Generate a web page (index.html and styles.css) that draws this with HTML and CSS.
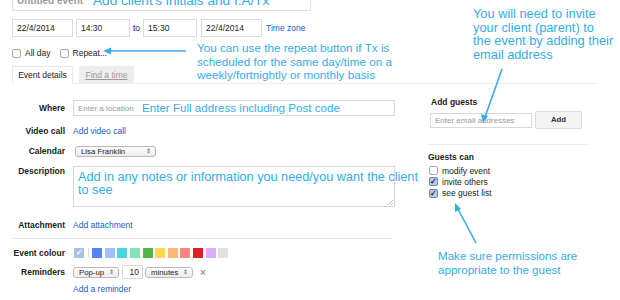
FILE: index.html
```html
<!DOCTYPE html>
<html>
<head>
    <title>Edit event</title>
    <link rel="stylesheet" href="styles.css">
</head>
<body>
<div class="page">
    <div class="title-box">
        <span class="title-text">Untitled event</span>
    </div>

    <div class="date-row">
        <div class="field date">22/4/2014</div>
        <div class="field time">14:30</div>
        <span class="to">to</span>
        <div class="field time">15:30</div>
        <div class="field date">22/4/2014</div>
        <a class="link">Time zone</a>
    </div>

    <div class="check-row">
        <label><span class="box"></span>All day</label>
        <label><span class="box"></span>Repeat...</label>
    </div>

    <div class="tabs">
        <div class="tab active">Event details</div>
        <div class="tab">Find a time</div>
    </div>

    <div class="content">
        <div class="form">
            <div class="row r-where">
                <div class="label">Where</div>
                <div class="input wide"><span class="ph">Enter a location</span></div>
            </div>
            <div class="row r-video">
                <div class="label">Video call</div>
                <a class="link">Add video call</a>
            </div>
            <div class="row r-cal">
                <div class="label">Calendar</div>
                <div class="select cal">Lisa Franklin<span class="arr">&#8661;</span></div>
            </div>
            <div class="row r-desc">
                <div class="label">Description</div>
                <div class="input wide area"><span class="grip"></span></div>
            </div>
            <div class="row r-attach">
                <div class="label">Attachment</div>
                <a class="link">Add attachment</a>
            </div>
            <div class="rule"></div>
            <div class="row r-colour">
                <div class="label">Event colour</div>
                <div class="swatches">
                    <span class="sw picked">&#10003;</span>
                    <span class="sep"></span>
                    <span class="sw" style="background:#5484ed"></span>
                    <span class="sw" style="background:#a4bdfc"></span>
                    <span class="sw" style="background:#46d6db"></span>
                    <span class="sw" style="background:#7ae7bf"></span>
                    <span class="sw" style="background:#51b749"></span>
                    <span class="sw" style="background:#fbd75b"></span>
                    <span class="sw" style="background:#ffb878"></span>
                    <span class="sw" style="background:#ff887c"></span>
                    <span class="sw" style="background:#dc2127"></span>
                    <span class="sw" style="background:#dbadff"></span>
                    <span class="sw" style="background:#e1e1e1"></span>
                </div>
            </div>
            <div class="row r-remind">
                <div class="label">Reminders</div>
                <div class="select popup">Pop-up<span class="arr">&#8661;</span></div>
                <div class="input num">10</div>
                <div class="select mins">minutes<span class="arr">&#8661;</span></div>
                <span class="close">&times;</span>
            </div>
            <div class="row r-add">
                <div class="label"></div>
                <a class="link">Add a reminder</a>
            </div>
        </div>

        <div class="side">
            <div class="side-title">Add guests</div>
            <div class="guest-row">
                <div class="input email"><span class="ph">Enter email addresses</span></div>
                <div class="btn">Add</div>
            </div>
            <div class="side-rule"></div>
            <div class="side-title can">Guests can</div>
            <label class="perm first"><span class="box"></span>modify event</label>
            <label class="perm"><span class="box on">&#10003;</span>invite others</label>
            <label class="perm"><span class="box on">&#10003;</span>see guest list</label>
        </div>
    </div>

    <!-- notes drawn over the screenshot -->
    <div class="note n-title">Add client's initials and I.A/Tx</div>
    <div class="note n-where">Enter Full address including Post code</div>
    <div class="note n-desc">Add in any notes or information you need/you want the client<br>to see</div>
    <div class="note n-repeat">You can use the repeat button if Tx is<br>scheduled for the same day/time on a<br>weekly/fortnightly or monthly basis</div>
    <div class="note n-invite">You will need to invite<br>your client (parent) to<br>the event by adding their<br>email address</div>
    <div class="note n-perm">Make sure permissions are<br>appropriate to the guest</div>

    <svg class="arrows" width="620" height="300" viewBox="0 0 620 300">
        <g stroke="#35ade6" stroke-width="1.6" fill="none">
            <line x1="186" y1="51" x2="108" y2="51"/>
            <line x1="502" y1="69" x2="485" y2="117"/>
            <line x1="476" y1="243" x2="458" y2="209"/>
        </g>
        <g fill="#35ade6">
            <polygon points="103,51 111,47.5 111,54.5"/>
            <polygon points="483,123 481,114 488,116"/>
            <polygon points="455,203 455,212 461,209"/>
        </g>
    </svg>
</div>
</body>
</html>
```

FILE: styles.css
```css
body {
    margin: 0;
    background: #fff;
    font-family: Arial, "Liberation Sans", sans-serif;
    font-size: 8.5px;
    color: #222;
}

.page {
    position: relative;
    width: 620px;
    height: 300px;
    overflow: hidden;
    padding-left: 12px;
    box-sizing: border-box;
}

.link {
    color: #1a5ad0;
    font-size: 8.5px;
}

/* title */
.title-box {
    width: 299px;
    height: 21px;
    margin-top: -10px;
    border: 1px solid #e0e0e0;
    box-sizing: border-box;
    padding-left: 4px;
}

.title-text {
    font-size: 10px;
    font-weight: bold;
    color: #9a9a9a;
    line-height: 20px;
}

/* date row */
.date-row {
    display: flex;
    align-items: center;
    margin-top: 8px;
    height: 18px;
}

.field {
    height: 18px;
    border: 1px solid #dcdcdc;
    box-sizing: border-box;
    padding-left: 4px;
    line-height: 16px;
    font-size: 8.5px;
    color: #222;
}

.field.date { width: 61px; }
.field.time { width: 54px; margin-left: 3px; }
.to + .field.time { margin-left: 0; }
.field.time + .field.date { margin-left: 4px; }
.to { margin: 0 3px 0 3px; font-size: 8.5px; }
.date-row .link { margin-left: 4px; }

/* checkbox row */
.check-row {
    display: flex;
    gap: 9px;
    margin-top: 10px;
    height: 12px;
    align-items: center;
}

.check-row label, .perm {
    display: flex;
    align-items: center;
    font-size: 8.5px;
}

.box {
    width: 7px;
    height: 7px;
    border: 1px solid #aaa;
    border-radius: 2px;
    margin-right: 4px;
    background: #fbfbfb;
    font-size: 8px;
    line-height: 7px;
    text-align: center;
    color: #223;
    font-weight: bold;
}

.box.on {
    background: #b9c9e6;
    border-color: #6f86b0;
}

/* tabs */
.tabs {
    display: flex;
    gap: 6px;
    margin-top: 7px;
    width: 585px;
    border-bottom: 1px solid #eee;
}

.tab {
    height: 18px;
    line-height: 18px;
    width: 55px;
    text-align: center;
    font-size: 8.5px;
    background: #eee;
    color: #999;
    text-decoration: underline;
    box-sizing: border-box;
    margin-bottom: -1px;
}

.tab.active {
    background: #fff;
    color: #222;
    text-decoration: none;
    border: 1px solid #e8e8e8;
    border-bottom: 1px solid #fff;
    width: 61px;
    line-height: 16px;
}

/* main content */
.content {
    display: flex;
}

.form {
    width: 383px;
}

.row {
    display: flex;
    align-items: center;
}

.label {
    width: 53px;
    text-align: right;
    font-weight: bold;
    font-size: 8.5px;
    margin-right: 8px;
    color: #222;
    flex: none;
}

.input {
    border: 1px solid #d9d9d9;
    box-sizing: border-box;
    font-size: 8.5px;
    padding-left: 4px;
}

.ph {
    color: #999;
    font-size: 8px;
}

.wide { width: 322px; }

.r-where { margin-top: 16px; }
.r-where .input { height: 16px; line-height: 14px; }

.r-video { margin-top: 8px; height: 14px; }
.r-cal { margin-top: 7px; height: 12px; }
.r-desc { margin-top: 9px; align-items: flex-start; }
.area { height: 41px; position: relative; }

.grip {
    position: absolute;
    right: 1px;
    bottom: 1px;
    width: 5px;
    height: 5px;
    background: linear-gradient(135deg, transparent 45%, #bbb 45%, #bbb 55%, transparent 55%, transparent 75%, #bbb 75%, #bbb 85%, transparent 85%);
}

.r-attach { margin-top: 11px; height: 14px; }

.rule {
    margin-top: 6px;
    width: 380px;
    border-top: 1px solid #e3e3e3;
}

.r-colour { margin-top: 8px; height: 12px; }
.r-remind { margin-top: 6px; height: 14px; }
.r-add { margin-top: 3px; height: 14px; }

.select {
    position: relative;
    height: 11px;
    border: 1px solid #b9b9b9;
    border-radius: 3px;
    background: linear-gradient(#fdfdfd, #ececec);
    box-sizing: border-box;
    font-size: 7.8px;
    line-height: 9px;
    padding-left: 5px;
    color: #222;
}

.arr {
    position: absolute;
    right: 4px;
    top: 0;
    font-size: 6px;
    color: #555;
}

.cal { width: 81px; margin-left: 2px; }

.r-remind .select { height: 11px; margin-top: 1px; }
.popup { width: 46px; }
.num {
    width: 21px;
    height: 14px;
    margin-left: 3px;
    text-align: right;
    padding-right: 3px;
    line-height: 12px;
    font-size: 8.5px;
}
.mins { width: 48px; margin-left: 2px; }

.close {
    margin-left: 7px;
    color: #999;
    font-size: 10px;
    font-weight: bold;
}

.swatches {
    display: flex;
    align-items: center;
    gap: 2.6px;
    margin-left: 1px;
}

.sw {
    width: 10px;
    height: 10px;
    display: inline-block;
}

.sw.picked {
    background: #a9c2e6;
    color: #fff;
    font-size: 8px;
    line-height: 10px;
    text-align: center;
    font-weight: bold;
}

.sep {
    width: 1px;
    height: 10px;
    background: #ddd;
    margin: 0 1px;
}

/* right column */
.side {
    margin-left: 33px;
    width: 162px;
}

.side-title {
    font-weight: bold;
    font-size: 8.5px;
    margin-top: 13px;
    margin-left: 3px;
}

.guest-row {
    display: flex;
    align-items: center;
    margin-top: 4px;
    margin-left: 2px;
}

.email {
    width: 102px;
    height: 15px;
    line-height: 13px;
}

.btn {
    width: 47px;
    height: 18px;
    margin-left: 3px;
    border: 1px solid #dcdcdc;
    background: #f3f3f3;
    border-radius: 2px;
    box-sizing: border-box;
    text-align: center;
    line-height: 16px;
    font-weight: bold;
    font-size: 7.8px;
    color: #333;
}

.side-rule {
    margin-top: 15px;
    width: 162px;
    border-top: 1px solid #eee;
}

.side-title.can { margin-top: 7px; margin-left: 0; }

.perm {
    height: 11.3px;
    margin-left: 1px;
}

.perm.first { margin-top: 3px; }

/* annotation notes */
.note {
    position: absolute;
    color: #35ade6;
    font-family: Arial, "Liberation Sans", sans-serif;
    font-size: 12px;
    line-height: 13.5px;
    white-space: nowrap;
}

.n-title { left: 93px; top: -6px; font-size: 13.6px; }
.n-where { left: 142px; top: 100px; font-size: 11.6px; line-height: 15px; }
.n-desc { left: 78px; top: 171px; font-size: 12.7px; line-height: 13px; }
.n-repeat { left: 197px; top: 41px; font-size: 11.7px; }
.n-invite { left: 473px; top: 7px; font-size: 12.8px; }
.n-perm { left: 438px; top: 249px; font-size: 11.6px; }

.arrows {
    position: absolute;
    left: 0;
    top: 0;
}
```
